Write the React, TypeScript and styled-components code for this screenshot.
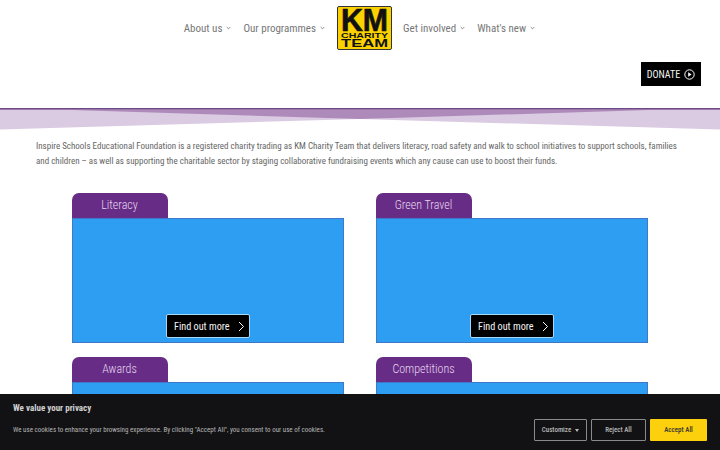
import React from "react";
import styled, { createGlobalStyle } from "styled-components";

const CONDENSED = `"Roboto", "Liberation Sans", sans-serif`;

const GlobalStyle = createGlobalStyle`
  html, body {
    margin: 0;
    padding: 0;
    height: 100%;
    overflow: hidden;
    background: #fff;
  }
  * {
    box-sizing: border-box;
  }
`;

const Chevron = () => (
  <ChevronSvg viewBox="0 0 6 4">
    <path d="M0.8 0.8 3 3 5.2 0.8" fill="none" stroke="#666" strokeWidth="0.9" />
  </ChevronSvg>
);

const Logo = () => (
  <LogoSvg viewBox="0 0 55 44">
    <rect x="0.5" y="0.5" width="54" height="43" rx="1.5" fill="#fbd100" stroke="#333" />
    <text x="4" y="25" textLength="47" lengthAdjust="spacingAndGlyphs" fontFamily="Liberation Sans" fontWeight="700" fontSize="31" stroke="#111" strokeWidth="0.7" fill="#111">
      KM
    </text>
    <text x="4" y="32" textLength="47" lengthAdjust="spacingAndGlyphs" fontFamily="Liberation Sans" fontWeight="700" fontSize="7.6" fill="#111">
      CHARITY
    </text>
    <text x="4" y="41" textLength="47" lengthAdjust="spacingAndGlyphs" fontFamily="Liberation Sans" fontWeight="700" fontSize="11" fill="#111">
      TEAM
    </text>
  </LogoSvg>
);

const NavEntry: React.FC<{ label: string }> = ({ label }) => (
  <NavItem>
    {label}
    <Chevron />
  </NavItem>
);

const Card: React.FC<{ title: string; more?: boolean }> = ({ title, more }) => (
  <CardWrap>
    <Tab>{title}</Tab>
    <CardBody>
      {more && (
        <MoreButton>
          Find out more
          <svg width="7" height="11" viewBox="0 0 7 11">
            <path d="M1 1 5.5 5.5 1 10" fill="none" stroke="#fff" strokeWidth="1" />
          </svg>
        </MoreButton>
      )}
    </CardBody>
  </CardWrap>
);

export default function App() {
  return (
    <>
      <GlobalStyle />
      <Page>
        <Header>
          <Nav>
            <NavSide $align="end">
              <NavEntry label="About us" />
              <NavEntry label="Our programmes" />
            </NavSide>
            <Logo />
            <NavSide $align="start">
              <NavEntry label="Get involved" />
              <NavEntry label="What's new" />
            </NavSide>
          </Nav>
          <DonateRow>
            <Donate>
              DONATE
              <svg width="11" height="11" viewBox="0 0 11 11">
                <circle cx="5.5" cy="5.5" r="4.7" fill="none" stroke="#fff" strokeWidth="1" />
                <path d="M4.2 3.2 7.6 5.5 4.2 7.8Z" fill="#fff" />
              </svg>
            </Donate>
          </DonateRow>
        </Header>
        <Wave viewBox="0 0 720 23" preserveAspectRatio="none">
          <path d="M0 1H720V21.5L360 11 0 21.5Z" fill="#dacae2" />
          <path d="M40 1H680L360 11Z" fill="#ae8abb" />
          <rect y="1" width="720" height="1" fill="#9a78aa" />
          <rect width="720" height="1" fill="#6e4a85" />
        </Wave>
        <Intro>
          Inspire Schools Educational Foundation is a registered charity trading as KM Charity Team that delivers
          literacy, road safety and walk to school initiatives to support schools, families and children – as well as
          supporting the charitable sector by staging collaborative fundraising events which any cause can use to boost
          their funds.
        </Intro>
        <CardGrid>
          <Card title="Literacy" more />
          <Card title="Green Travel" more />
          <Card title="Awards" />
          <Card title="Competitions" />
        </CardGrid>
      </Page>
      <CookieBar>
        <CookieText>
          <CookieTitle>We value your privacy</CookieTitle>
          <CookieCopy>
            We use cookies to enhance your browsing experience. By clicking "Accept All", you consent to our use of
            cookies.
          </CookieCopy>
        </CookieText>
        <CookieActions>
          <OutlineButton $width={53}>
            Customize
            <Caret />
          </OutlineButton>
          <OutlineButton $width={55}>Reject All</OutlineButton>
          <AcceptButton>Accept All</AcceptButton>
        </CookieActions>
      </CookieBar>
    </>
  );
}

const Page = styled.div`
  width: 720px;
  height: 450px;
  overflow: hidden;
  font-family: ${CONDENSED};
  font-stretch: 75%;
`;

const Header = styled.header`
  height: 108px;
  display: flex;
  flex-direction: column;
`;

const Nav = styled.nav`
  display: grid;
  grid-template-columns: 337px 55px 1fr;
  height: 56px;
  padding-top: 6px;
`;

const NavSide = styled.div<{ $align: "start" | "end" }>`
  display: flex;
  justify-content: ${(p) => (p.$align === "end" ? "flex-end" : "flex-start")};
  gap: 12px;
  height: 44px;
  padding: 0 ${(p) => (p.$align === "end" ? "12px" : "0")} 0 ${(p) => (p.$align === "start" ? "11px" : "0")};
  align-items: center;
`;

const NavItem = styled.a`
  display: flex;
  align-items: center;
  gap: 4px;
  font-size: 11px;
  color: #777;
  white-space: nowrap;
`;

const ChevronSvg = styled.svg`
  width: 5px;
  height: 4px;
`;

const LogoSvg = styled.svg`
  width: 55px;
  height: 44px;
  display: block;
  overflow: visible;
`;

const DonateRow = styled.div`
  display: flex;
  justify-content: flex-end;
  padding: 6px 19px 0 0;
`;

const Donate = styled.a`
  width: 60px;
  height: 24px;
  background: #000;
  color: #f2f2f2;
  font-size: 10px;
  display: flex;
  align-items: center;
  justify-content: center;
  gap: 4px;
`;

const Wave = styled.svg`
  display: block;
  width: 720px;
  height: 23px;
`;

const Intro = styled.p`
  margin: 8px 36px 0;
  font-size: 9px;
  line-height: 15px;
  color: #666;
`;

const CardGrid = styled.div`
  display: grid;
  grid-template-columns: 272px 272px;
  column-gap: 32px;
  row-gap: 14px;
  padding: 24px 0 0 72px;
`;

const CardWrap = styled.section`
  display: flex;
  flex-direction: column;
  align-items: flex-start;
`;

const Tab = styled.div`
  width: 96px;
  height: 25px;
  padding: 0 1px 2px 0;
  background: #672d86;
  color: #e6d6ee;
  border-radius: 7px 7px 0 0;
  font-size: 12px;
  font-weight: 300;
  display: flex;
  align-items: center;
  justify-content: center;
`;

const CardBody = styled.div`
  width: 272px;
  height: 125px;
  background: #2e9ef2;
  border: 1px solid #3f78c9;
  display: flex;
  justify-content: center;
  align-items: flex-end;
  padding-bottom: 4px;
`;

const MoreButton = styled.a`
  width: 84px;
  height: 24px;
  background: #000;
  border: 1px solid #a8d8f8;
  border-radius: 2px;
  color: #f4f4f4;
  font-size: 10.2px;
  display: flex;
  align-items: center;
  justify-content: space-between;
  padding: 0 4px 0 7px;
`;

const CookieBar = styled.aside`
  position: fixed;
  left: 0;
  right: 0;
  bottom: 0;
  height: 56px;
  background: #121214;
  font-family: ${CONDENSED};
  font-stretch: 75%;
  display: flex;
  justify-content: space-between;
  padding: 0 13px;
`;

const CookieText = styled.div`
  padding-top: 9px;
`;

const CookieTitle = styled.div`
  font-size: 9px;
  font-weight: 700;
  color: #d0d0d0;
  line-height: 11px;
`;

const CookieCopy = styled.p`
  margin: 11px 0 0;
  font-size: 7px;
  line-height: 10px;
  color: #b5b5b5;
  white-space: nowrap;
`;

const CookieActions = styled.div`
  display: flex;
  gap: 4px;
  padding-top: 25px;
  align-items: flex-start;
`;

const OutlineButton = styled.button<{ $width: number }>`
  width: ${(p) => p.$width}px;
  height: 22px;
  background: transparent;
  border: 1px solid #8a8a8a;
  border-radius: 1px;
  color: #b8b8b8;
  font-family: inherit;
  font-stretch: inherit;
  font-size: 7px;
  font-weight: 500;
  display: flex;
  align-items: center;
  justify-content: center;
  gap: 4px;
  padding: 0;
`;

const Caret = styled.span`
  width: 0;
  height: 0;
  border-left: 2.5px solid transparent;
  border-right: 2.5px solid transparent;
  border-top: 3px solid #b8b8b8;
`;

const AcceptButton = styled.button`
  width: 57px;
  height: 22px;
  background: #fcd00c;
  border: none;
  border-radius: 1px;
  color: #333;
  font-family: inherit;
  font-stretch: inherit;
  font-size: 7px;
  font-weight: 500;
  padding: 0;
`;
